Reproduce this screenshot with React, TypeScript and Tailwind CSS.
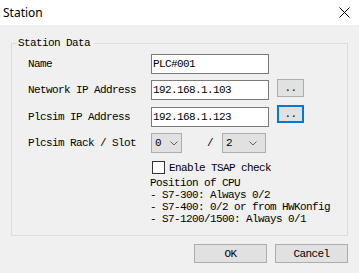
import React from "react";

const mono = "font-['Liberation_Mono','Courier_New',monospace] text-[11px] tracking-[-0.6px] leading-[12px] text-black";

function Chevron() {
  return (
    <svg width="8" height="5" viewBox="0 0 8 5" className="shrink-0">
      <path d="M0.5 0.5 L4 4 L7.5 0.5" fill="none" stroke="#606060" strokeWidth="1" />
    </svg>
  );
}

function Field({ label, value, button, focused }: { label: string; value: string; button?: boolean; focused?: boolean }) {
  return (
    <div className="flex items-start h-[20px]">
      <div className="w-[123px] h-[20px] flex items-center">{label}</div>
      <div className="w-[118px] h-[20px] border border-[#7a7a7a] bg-white flex items-center pl-[1px]">
        {value}
      </div>
      {button && (
        <div
          className={
            focused
              ? "ml-[8px] -mt-[2px] w-[27px] h-[18px] border-2 border-[#0078d7] bg-[#e1e1e1] flex items-center justify-center"
              : "ml-[8px] -mt-[1px] w-[27px] h-[18px] border border-[#adadad] bg-[#e1e1e1] flex items-center justify-center"
          }
        >
          ..
        </div>
      )}
    </div>
  );
}

export default function App() {
  return (
    <div className={`w-[359px] h-[273px] bg-[#f0f0f0] flex flex-col overflow-hidden ${mono}`}>
      {/* Title bar */}
      <div className="h-[25px] bg-white flex items-center justify-between pl-[3px] pr-[9px] shrink-0">
        <span className="font-['Noto_Sans',sans-serif] text-[12px] tracking-normal text-black">Station</span>
        <svg width="11" height="11" viewBox="0 0 11 11">
          <path d="M0.5 0.5 L10.5 10.5 M10.5 0.5 L0.5 10.5" stroke="#000" strokeWidth="1" />
        </svg>
      </div>

      <div className="px-[11px] pt-[12px]">
        {/* Group box */}
        <fieldset className="border border-[#dcdcdc] h-[199px] p-0 m-0">
          <legend className="ml-[5px] pl-[1px] pr-[4px] leading-[12px]">Station Data</legend>
          <div className="pl-[16px] pt-[5px] flex flex-col">
            <Field label="Name" value="PLC#001" />
            <div className="mt-[6px]">
              <Field label="Network IP Address" value="192.168.1.103" button />
            </div>
            <div className="mt-[7px]">
              <Field label="Plcsim IP Address" value="192.168.1.123" button focused />
            </div>
            <div className="mt-[6px] flex items-center h-[20px]">
              <div className="w-[123px]">Plcsim Rack / Slot</div>
              <div className="w-[31px] h-[20px] border border-[#adadad] bg-[#e1e1e1] flex items-center justify-between pl-[3px] pr-[3px]">
                <span>0</span>
                <Chevron />
              </div>
              <span className="ml-[25px] w-[15px]">/</span>
              <div className="w-[44px] h-[20px] border border-[#adadad] bg-[#e1e1e1] flex items-center justify-between pl-[3px] pr-[8px]">
                <span>2</span>
                <Chevron />
              </div>
            </div>
            <div className="mt-[8px] flex items-center pl-[124px]">
              <div className="w-[13px] h-[13px] border border-[#333333] bg-white" />
              <span className="ml-[4px]">Enable TSAP check</span>
            </div>
            <div className="mt-[3px] pl-[122px] flex flex-col">
              <span>Position of CPU</span>
              <span>- S7-300: Always 0/2</span>
              <span>- S7-400: 0/2 or from HWKonfig</span>
              <span>- S7-1200/1500: Always 0/1</span>
            </div>
          </div>
        </fieldset>

        {/* Buttons */}
        <div className="mt-[8px] flex justify-end gap-[8px]">
          <div className="w-[73px] h-[19px] border border-[#adadad] bg-[#e1e1e1] flex items-center justify-center">OK</div>
          <div className="w-[73px] h-[19px] border border-[#adadad] bg-[#e1e1e1] flex items-center justify-center">Cancel</div>
        </div>
      </div>
    </div>
  );
}
